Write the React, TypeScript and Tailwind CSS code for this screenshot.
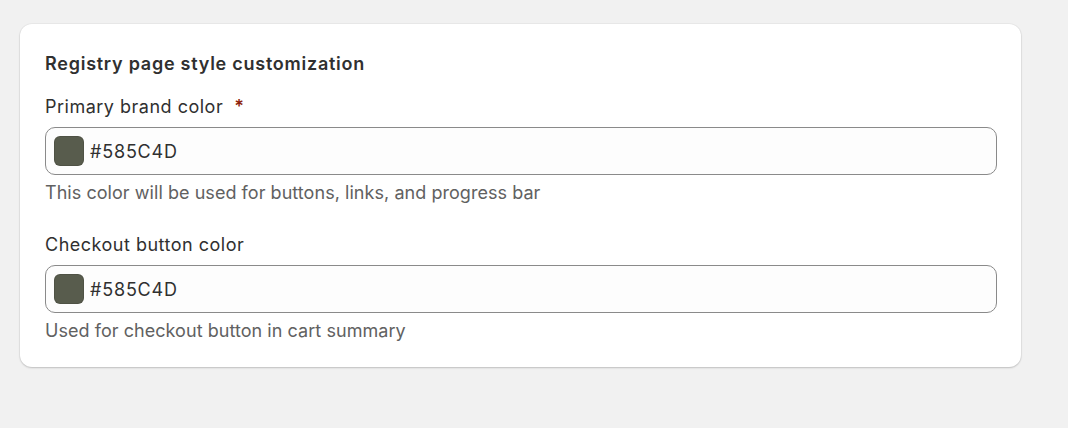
const fieldFont = { fontFamily: 'Inter, "Noto Sans", sans-serif' };

interface ColorFieldProps {
  label: string;
  required?: boolean;
  value: string;
  help: string;
}

function ColorField({ label, required, value, help }: ColorFieldProps) {
  return (
    <div>
      <label className="flex h-6 items-center text-[18px] tracking-[0.5px] text-[#303030]">
        {label}
        {required && <span className="ml-[11px] font-semibold text-[#8e1f0b]">*</span>}
      </label>
      <div className="mt-[9px] flex h-12 items-center gap-[6px] rounded-[10px] border border-[#8a8a8a] bg-[#fdfdfd] pl-2">
        <span
          className="h-[30px] w-[30px] shrink-0 rounded-[6px] border border-black/10"
          style={{ backgroundColor: value }}
        />
        <span className="text-[18px] tracking-[0.8px] text-[#303030]">{value}</span>
      </div>
      <p className="mt-[6px] h-6 text-[18px] leading-6 tracking-[0.05px] text-[#616161]">{help}</p>
    </div>
  );
}

export default function App() {
  return (
    <div className="min-h-[428px] bg-[#f1f1f1] pl-5 pr-[47px] pt-6" style={fieldFont}>
      <section className="rounded-[12px] bg-white pb-6 pl-[25px] pr-[24px] pt-[28px] shadow-[0_1px_2px_rgba(0,0,0,0.18),0_0_0_1px_rgba(0,0,0,0.03)]">
        <h2 className="h-6 text-[18px] font-semibold leading-6 tracking-[0.75px] text-[#303030]">
          Registry page style customization
        </h2>
        <div className="mt-[18px]">
          <ColorField
            label="Primary brand color"
            required
            value="#585C4D"
            help="This color will be used for buttons, links, and progress bar"
          />
        </div>
        <div className="mt-[27px]">
          <ColorField
            label="Checkout button color"
            value="#585C4D"
            help="Used for checkout button in cart summary"
          />
        </div>
      </section>
    </div>
  );
}
